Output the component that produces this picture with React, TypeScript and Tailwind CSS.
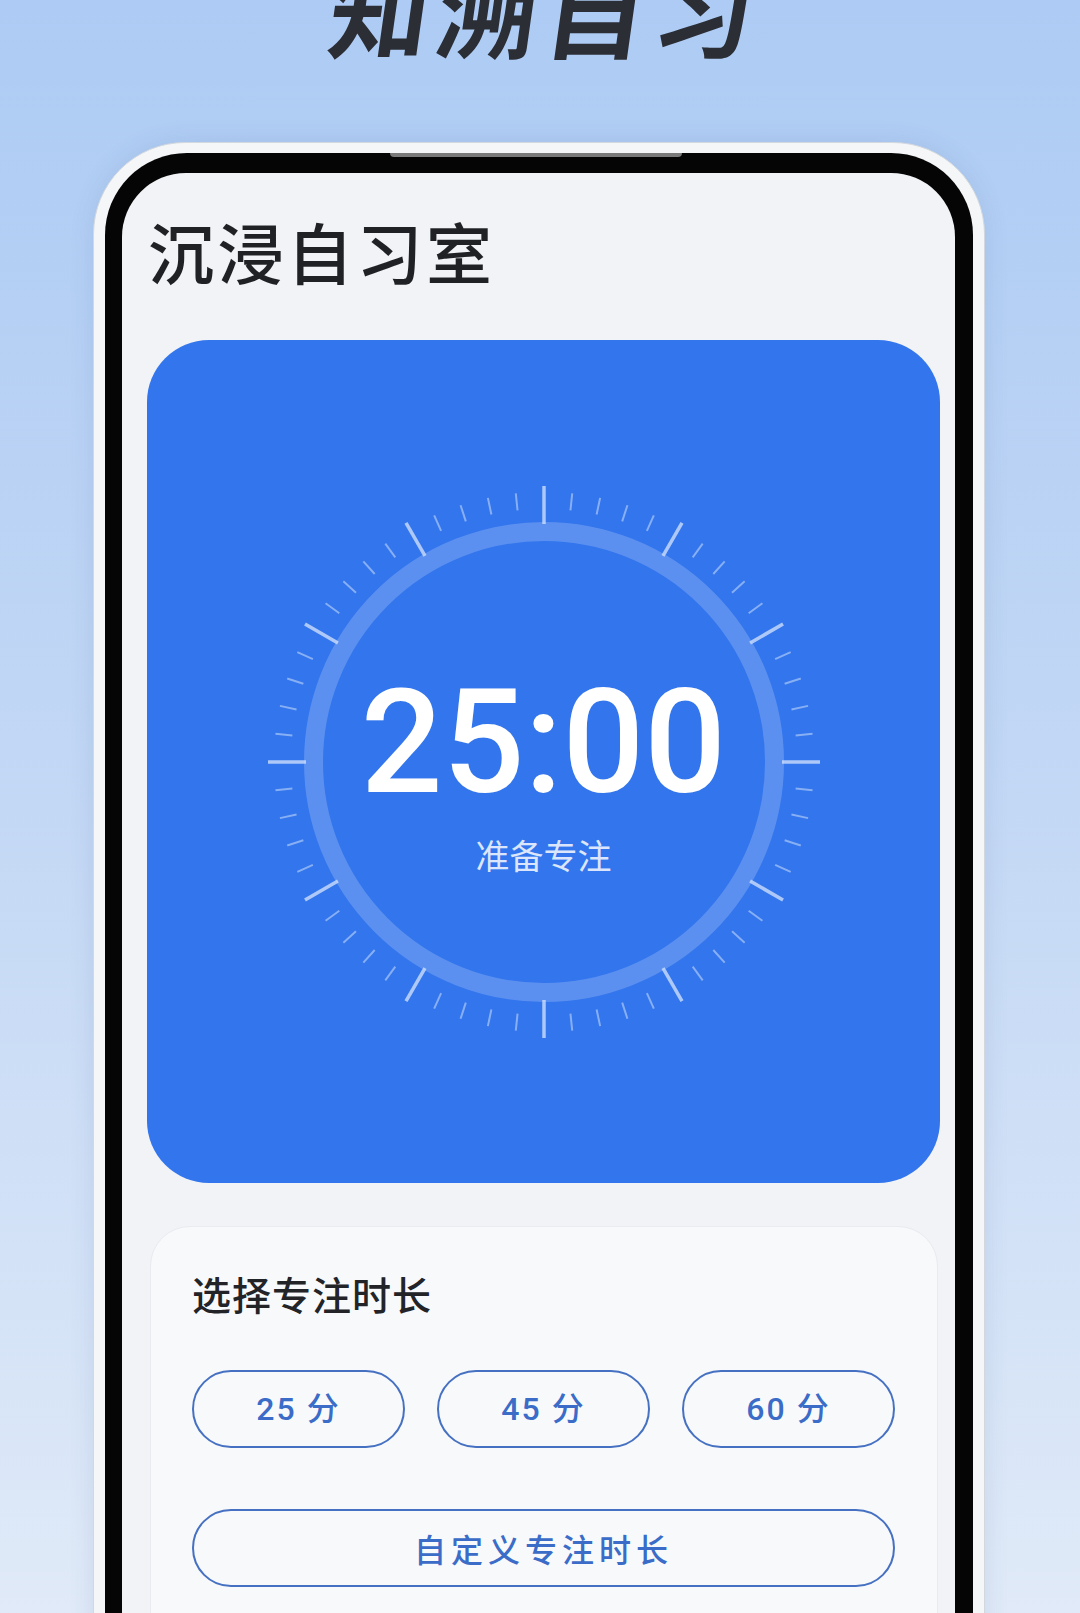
import React from 'react';

const cjk = { fontFamily: '"Noto Sans CJK SC", "Noto Sans", sans-serif' };
const latin = { fontFamily: 'Roboto, "Noto Sans CJK SC", sans-serif' };

const TickDial = () => {
  const cx = 300;
  const cy = 300;
  const ticks = Array.from({ length: 60 }, (_, i) => {
    const major = i % 5 === 0;
    const a = (i * 6 * Math.PI) / 180;
    const r1 = major ? 238 : 253;
    const r2 = major ? 276 : 270;
    return {
      key: i,
      major,
      x1: cx + r1 * Math.sin(a),
      y1: cy - r1 * Math.cos(a),
      x2: cx + r2 * Math.sin(a),
      y2: cy - r2 * Math.cos(a),
    };
  });

  return (
    <svg width="600" height="600" viewBox="0 0 600 600" className="col-start-1 row-start-1">
      <circle cx={cx} cy={cy} r="230.5" fill="none" stroke="#5b90f1" strokeWidth="19" />
      {ticks.map((t) => (
        <line
          key={t.key}
          x1={t.x1}
          y1={t.y1}
          x2={t.x2}
          y2={t.y2}
          stroke={t.major ? 'rgba(205,222,252,0.8)' : 'rgba(205,222,252,0.55)'}
          strokeWidth={t.major ? 3.5 : 2}
          strokeLinecap="butt"
        />
      ))}
    </svg>
  );
};

export default function App() {
  const presets = ['25 分', '45 分', '60 分'];

  return (
    <div className="w-[1080px] h-[1613px] overflow-hidden bg-gradient-to-b from-[#adcbf4] via-[#c3d8f5] to-[#e0eaf8]">
      {/* banner title */}
      <h1
        className="-mt-[42px] -skew-x-8 text-center text-[100px] leading-[100px] font-bold tracking-[8px] text-[#2b2e34] pl-[14px]"
        style={cjk}
      >
        知溯自习
      </h1>

      {/* phone mockup */}
      <div className="ml-[93px] mt-[84px] w-[892px] h-[1600px] rounded-t-[92px] bg-[#f5f6f8] border border-[#d3d8de] pt-[10px] px-[11px] shadow-[0_0_24px_rgba(60,90,140,0.12)]">
        <div className="relative h-full rounded-t-[82px] bg-[#050505] pt-[20px] pl-[17px] pr-[18px]">
          <div className="absolute top-0 left-[285px] w-[292px] h-[4px] rounded-b-[4px] bg-[#7a7a7a]" />

          <div className="h-full rounded-t-[64px] bg-[#f1f3f6] pl-[25px] pr-[15px] pt-[44px]">
            <div className="pl-[1px] text-[66px] leading-[66px] font-medium tracking-[3.5px] text-[#1f2125]" style={cjk}>
              沉浸自习室
            </div>

            {/* timer card */}
            <div className="mt-[57px] h-[843px] rounded-[62px] bg-[#3275ec] grid place-items-center">
              <TickDial />
              <div className="col-start-1 row-start-1 flex flex-col items-center pt-[19px]">
                <div className="text-[144px] leading-[144px] font-medium text-white" style={latin}>
                  25:00
                </div>
                <div className="mt-[23px] text-[34px] leading-[34px] text-[#dbe6fc]" style={cjk}>
                  准备专注
                </div>
              </div>
            </div>

            {/* duration card */}
            <div className="mt-[43px] ml-[3px] mr-[2px] h-[500px] rounded-[40px] bg-[#f8f9fb] border border-[#e8ebef] pt-[47px] pl-[41px] pr-[42px]">
              <div className="text-[39px] leading-[39px] tracking-[1px] font-medium text-[#222428]" style={cjk}>
                选择专注时长
              </div>

              <div className="mt-[57px] grid grid-cols-3 gap-[32px]">
                {presets.map((p) => (
                  <button
                    key={p}
                    className="h-[78px] rounded-full border-[2.5px] border-[#4671c2] flex items-center justify-center text-[32px] font-medium tracking-[2px] text-[#3a6cc8]"
                    style={latin}
                  >
                    {p}
                  </button>
                ))}
              </div>

              <button
                className="mt-[61px] w-full h-[78px] rounded-full border-[2.5px] border-[#4671c2] flex items-center justify-center text-[32px] font-medium tracking-[5px] text-[#3a6cc8]"
                style={cjk}
              >
                自定义专注时长
              </button>
            </div>
          </div>
        </div>
      </div>
    </div>
  );
}
